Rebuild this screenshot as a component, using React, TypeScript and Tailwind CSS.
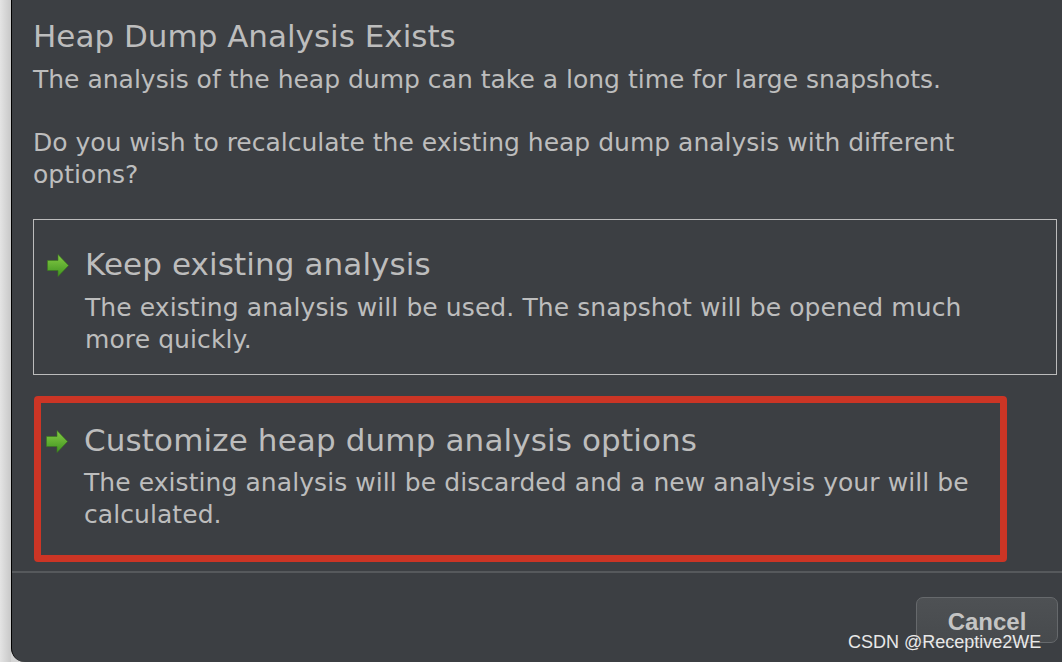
import React from "react";

function Arrow() {
  return (
    <svg width="22" height="23" viewBox="0 0 22 23" className="shrink-0">
      <defs>
        <linearGradient id="ag" x1="0" y1="0" x2="0" y2="1">
          <stop offset="0" stopColor="#86cc45" />
          <stop offset="1" stopColor="#3f9320" />
        </linearGradient>
      </defs>
      <path d="M0.5 6.5 H11 V0.5 L21.5 11.5 L11 22.5 V16.5 H0.5 Z" fill="url(#ag)" stroke="#3a7a1c" strokeWidth="0.6" />
    </svg>
  );
}

export default function App() {
  const font = { fontFamily: '"DejaVu Sans", sans-serif' };
  const sans = { fontFamily: '"Liberation Sans", Arial, sans-serif' };
  return (
    <div className="w-[1062px] h-[662px] flex bg-[#d4d4d4] overflow-hidden" style={font}>
      <div className="w-[11px] h-full bg-gradient-to-r from-[#e4e4e4] to-[#c8c8c8]" />
      <div className="flex-1 h-full bg-[#3c3f43] border-l border-black rounded-bl-[14px] flex flex-col text-[#bdbdbd]">
        <div className="pl-[21px] pr-[5px] pt-[16px]">
          <div className="text-[31px] leading-[40px]">Heap Dump Analysis Exists</div>
          <div className="text-[25px] leading-[32px] mt-[8px]">
            The analysis of the heap dump can take a long time for large snapshots.
          </div>
          <div className="text-[25px] leading-[32px] mt-[31px]">
            Do you wish to recalculate the existing heap dump analysis with different
            <br />
            options?
          </div>
          <div className="mt-[28px] h-[156px] border border-[#bcbcbc] flex items-start pl-[13px] pt-[24px]">
            <div className="mt-[10px]"><Arrow /></div>
            <div className="ml-[16px]">
              <div className="text-[31px] leading-[40px] tracking-[0.1px]">Keep existing analysis</div>
              <div className="text-[25px] leading-[32px] mt-[8px] tracking-[0.09px]">
                The existing analysis will be used. The snapshot will be opened much
                <br />
                more quickly.
              </div>
            </div>
          </div>
          <div className="mt-[21px] w-[973px] h-[166px] ml-[1px] border-[7px] border-[#cc3525] rounded-[4px] flex items-start pl-[5px] pt-[17px]">
            <div className="mt-[10px]"><Arrow /></div>
            <div className="ml-[16px]">
              <div className="text-[31px] leading-[40px] tracking-[0.13px]">Customize heap dump analysis options</div>
              <div className="text-[25px] leading-[32px] mt-[7px] tracking-[0.07px]">
                The existing analysis will be discarded and a new analysis your will be
                <br />
                calculated.
              </div>
            </div>
          </div>
        </div>
        <div className="mt-[9px] h-[2px] bg-[#56595c]" />
        <div className="flex justify-end pr-[4px] pt-[24px] relative flex-1">
          <div
            className="w-[142px] h-[46px] rounded-[7px] border border-[#66696c] bg-gradient-to-b from-[#4e5154] to-[#474a4d] flex justify-center pt-[8px] text-[#c4c4c4] text-[24px] font-bold leading-[32px]"
            style={sans}
          >
            Cancel
          </div>
          <div className="absolute left-[836px] top-[58px] text-[18px] leading-[22px] text-[#e8e8e8]" style={sans}>
            CSDN @Receptive2WE
          </div>
        </div>
      </div>
    </div>
  );
}
